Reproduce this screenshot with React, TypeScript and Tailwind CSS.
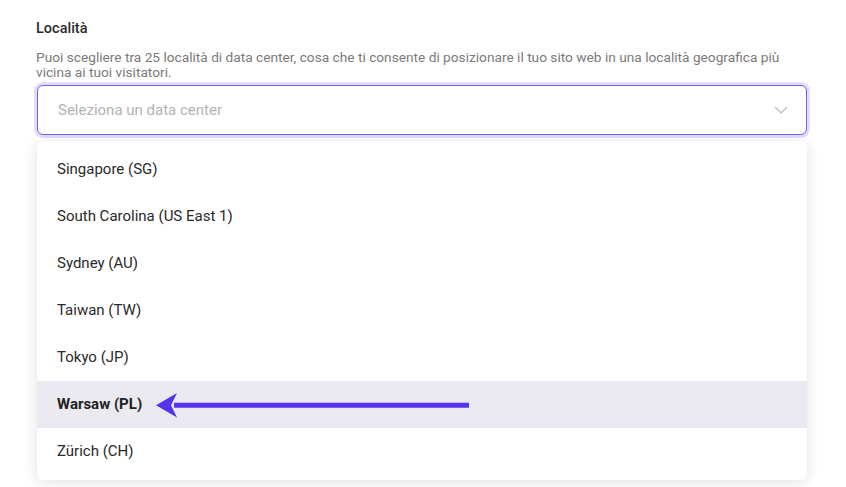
const items = [
  "Singapore (SG)",
  "South Carolina (US East 1)",
  "Sydney (AU)",
  "Taiwan (TW)",
  "Tokyo (JP)",
  "Warsaw (PL)",
  "Zürich (CH)",
];

const App = () => {
  return (
    <div className="h-[487px] w-[846px] overflow-hidden bg-white font-['Roboto',sans-serif] text-[#222]">
      <div className="px-[36px] pt-[20px]">
        <h3 className="text-[14.5px] font-medium leading-[18px] text-[#2b2b2b]">
          Località
        </h3>
        <p className="mt-[12px] pr-[20px] text-[13.7px] leading-[15px] text-[#7a7a7a]">
          Puoi scegliere tra 25 località di data center, cosa che ti consente di
          posizionare il tuo sito web in una località geografica più vicina ai
          tuoi visitatori.
        </p>

        <div className="mt-[5px] ml-px mr-[3px] flex h-[50px] items-center justify-between rounded-md border-[1.5px] border-[#7a5cf5] bg-white pl-[20px] pr-[18px] shadow-[0_0_0_3px_#e4dcfd]">
          <span className="text-[15px] text-[#b3b3b3]">
            Seleziona un data center
          </span>
          <svg width="14" height="8" viewBox="0 0 14 8" fill="none">
            <path d="M1 1l6 6 6-6" stroke="#b8b8b8" strokeWidth="1.2" />
          </svg>
        </div>

        <div className="mt-[6px] ml-px mr-[3px] rounded-md bg-white py-[5px] shadow-[0_2px_14px_rgba(0,0,0,0.12)]">
          {items.map((item) => {
            const active = item === "Warsaw (PL)";
            return (
              <div
                key={item}
                className={`flex h-[47px] items-center pl-[20px] text-[15px] ${
                  active ? "bg-[#ebeaf0] font-bold text-[#222]" : "text-[#2a2a2a]"
                }`}
              >
                <span>{item}</span>
                {active && (
                  <svg
                    className="ml-[14px]"
                    width="314"
                    height="26"
                    viewBox="0 0 314 26"
                  >
                    <path d="M18 10.8H313V15.7H18z" fill="#5533ee" />
                    <path d="M0 13.25L21 1 15 13.25 21 25.5z" fill="#5533ee" />
                  </svg>
                )}
              </div>
            );
          })}
        </div>
      </div>
    </div>
  );
};

export default App;
